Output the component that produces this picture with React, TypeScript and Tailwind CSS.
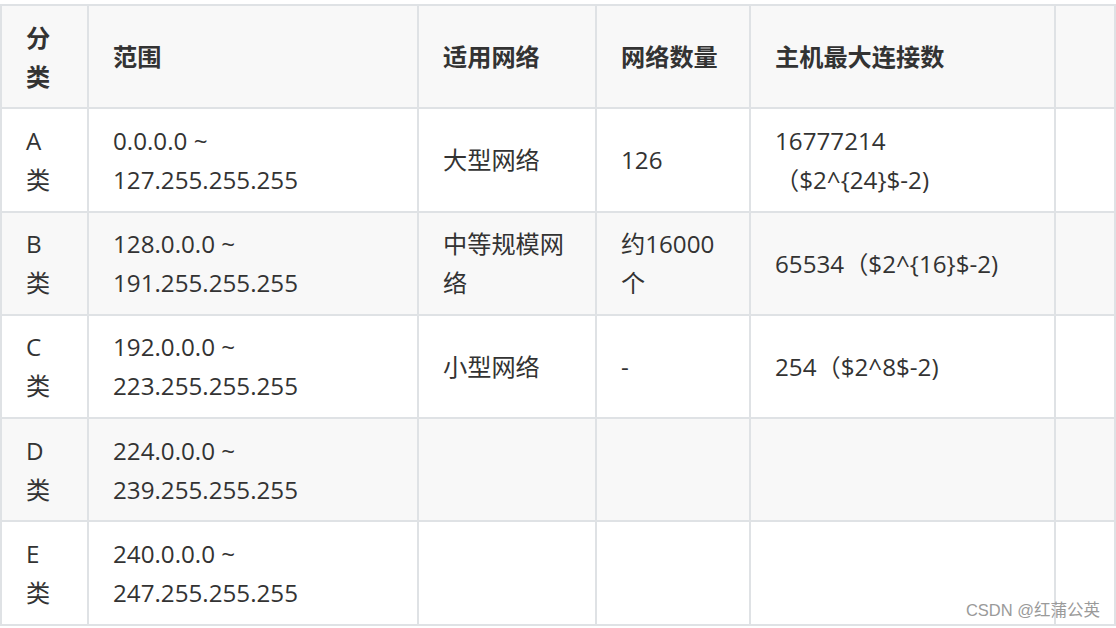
const rows = [
  { cls: ["A", "类"], range: ["0.0.0.0 ~", "127.255.255.255"], net: ["大型网络"], count: ["126"], hosts: ["16777214", "（$2^{24}$-2)"] },
  { cls: ["B", "类"], range: ["128.0.0.0 ~", "191.255.255.255"], net: ["中等规模网", "络"], count: ["约16000", "个"], hosts: ["65534（$2^{16}$-2)"] },
  { cls: ["C", "类"], range: ["192.0.0.0 ~", "223.255.255.255"], net: ["小型网络"], count: ["-"], hosts: ["254（$2^8$-2)"] },
  { cls: ["D", "类"], range: ["224.0.0.0 ~", "239.255.255.255"], net: [], count: [], hosts: [] },
  { cls: ["E", "类"], range: ["240.0.0.0 ~", "247.255.255.255"], net: [], count: [], hosts: [] },
];

function Lines({ items }: { items: string[] }) {
  return (
    <>
      {items.map((t, i) => (
        <span key={i} className="block whitespace-nowrap">
          {t}
        </span>
      ))}
    </>
  );
}

const cell = "border-2 border-[#dfe2e5] px-[24px] py-[11.65px] align-middle text-left";

export default function App() {
  return (
    <div
      className="relative w-[1116px] h-[628px] bg-white pt-[4px] text-[#333] text-[24.2px] leading-[39px]"
      style={{ fontFamily: '"Open Sans", "Noto Sans CJK SC", sans-serif' }}
    >
      <table className="table-fixed border-collapse w-[1114px]">
        <colgroup>
          <col className="w-[87px]" />
          <col className="w-[330px]" />
          <col className="w-[178px]" />
          <col className="w-[154px]" />
          <col className="w-[305px]" />
          <col className="w-[60px]" />
        </colgroup>
        <thead>
          <tr className="bg-[#f8f8f8] font-bold">
            <th className={cell}>
              <Lines items={["分", "类"]} />
            </th>
            <th className={cell}>范围</th>
            <th className={cell}>适用网络</th>
            <th className={cell}>网络数量</th>
            <th className={cell}>主机最大连接数</th>
            <th className={cell}></th>
          </tr>
        </thead>
        <tbody>
          {rows.map((r, i) => (
            <tr key={i} className={i % 2 === 1 ? "bg-[#f8f8f8]" : "bg-white"}>
              <td className={cell}>
                <Lines items={r.cls} />
              </td>
              <td className={cell}>
                <Lines items={r.range} />
              </td>
              <td className={cell}>
                <Lines items={r.net} />
              </td>
              <td className={cell}>
                <Lines items={r.count} />
              </td>
              <td className={cell}>
                <Lines items={r.hosts} />
              </td>
              <td className={cell}></td>
            </tr>
          ))}
        </tbody>
      </table>
      <div
        className="absolute right-[16px] bottom-[8px] text-[16.5px] leading-[20px] text-[#9a9a9a]"
        style={{ fontFamily: '"Liberation Sans", "Noto Sans CJK SC", sans-serif' }}
      >
        CSDN @红蒲公英
      </div>
    </div>
  );
}
